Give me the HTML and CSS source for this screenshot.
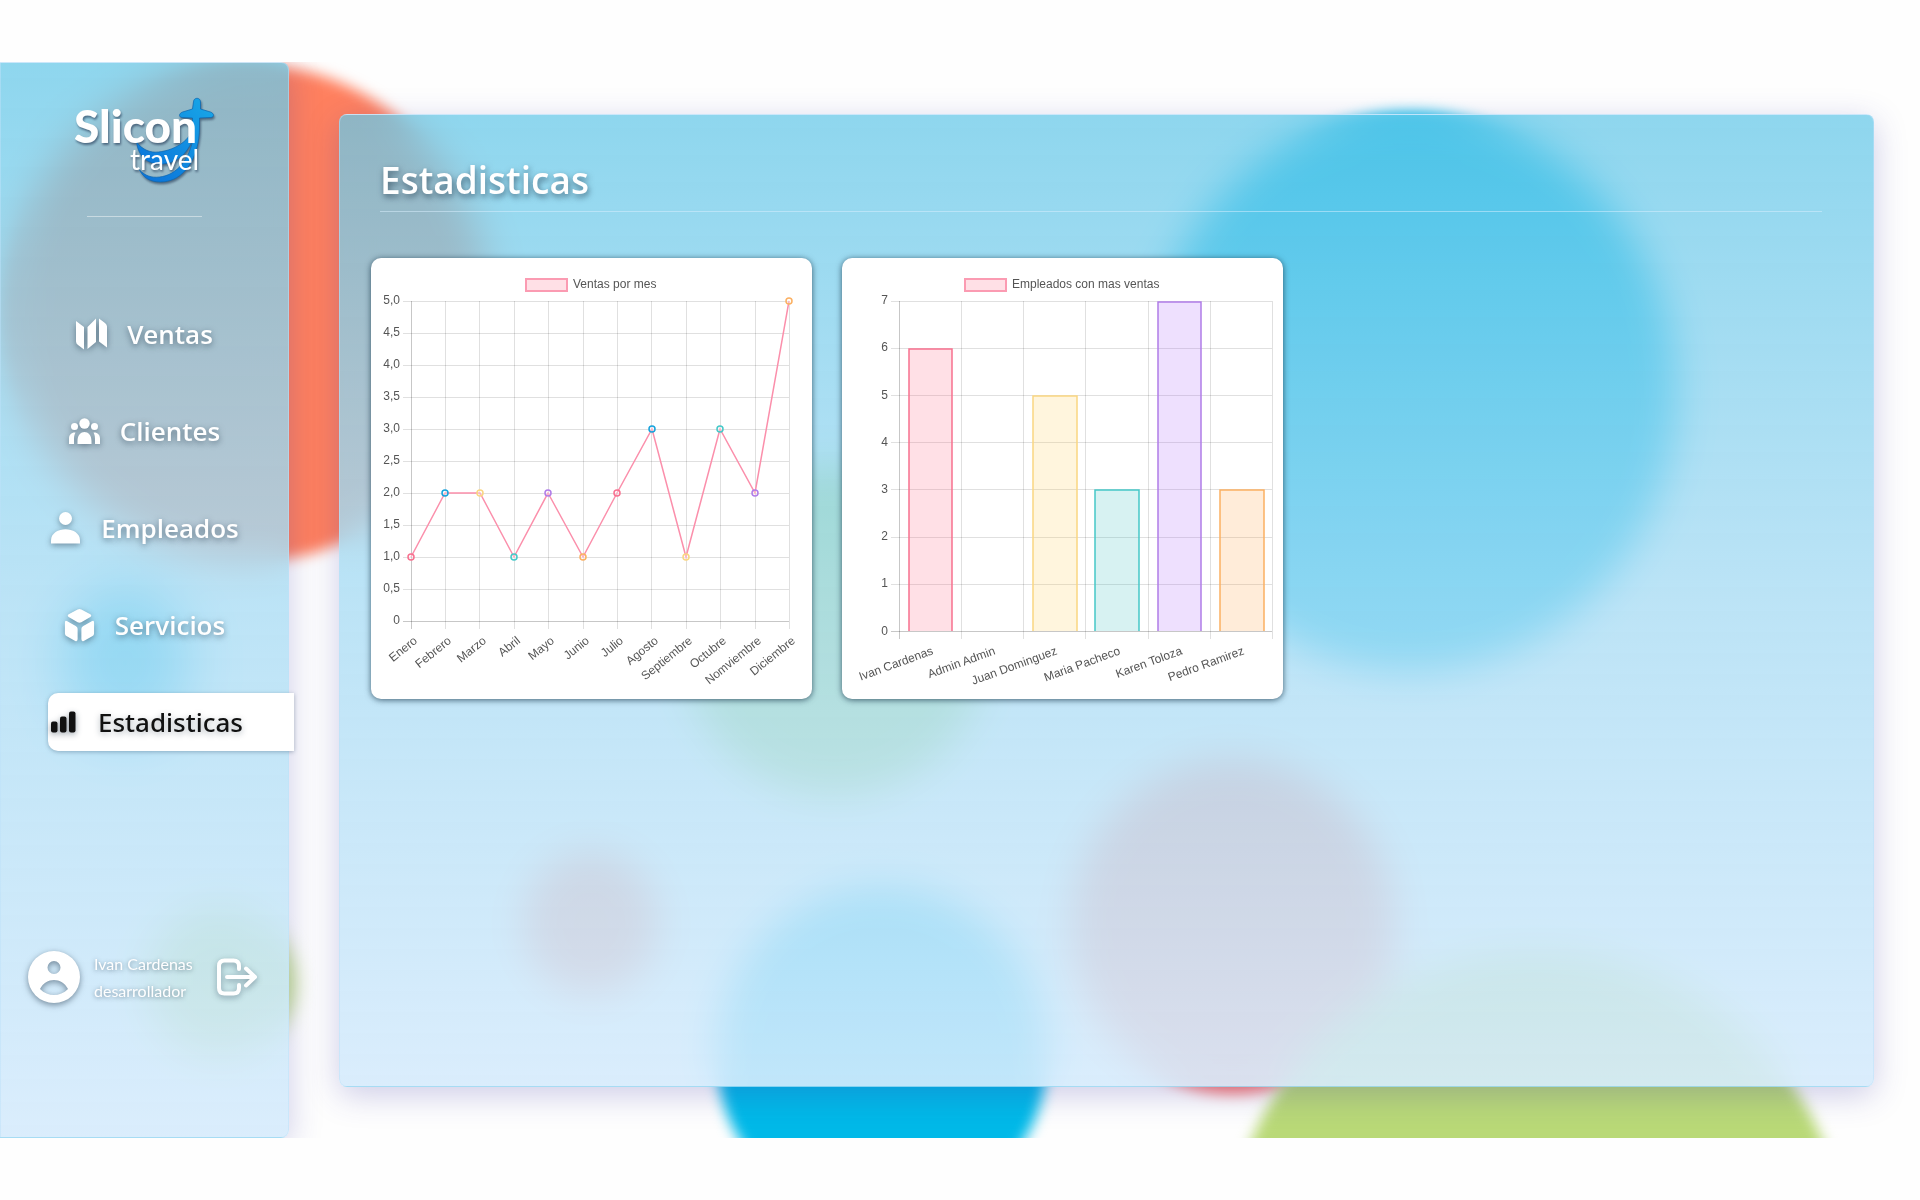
FILE: index.html
```html
<!DOCTYPE html>
<html lang="es">
<head>
<meta charset="utf-8">
<meta name="viewport" content="width=device-width, initial-scale=1">
<title>Slicon travel - Estadisticas</title>
<link rel="stylesheet" href="styles.css">
</head>
<body>
<div class="stage">
  <div class="bubbles" aria-hidden="true">
    <span class="bubble coral-large"></span>
    <span class="bubble blue-large"></span>
    <span class="bubble green-mid"></span>
    <span class="bubble red-small"></span>
    <span class="bubble red-mid"></span>
    <span class="bubble blue-bottom"></span>
    <span class="bubble green-bottom"></span>
    <span class="bubble blue-side"></span>
    <span class="bubble green-side"></span>
  </div>

  <aside class="sidebar glass">
    <svg class="logo" viewBox="0 0 146 88" role="img" aria-label="Slicon travel">
      <defs>
        <linearGradient id="swoosh" x1="0" y1="1" x2="1" y2="0">
          <stop offset="0" stop-color="#0a6fd8"/>
          <stop offset="1" stop-color="#18a8e8"/>
        </linearGradient>
      </defs>
      <g fill="url(#swoosh)" stroke="#0b66b0" stroke-width="0.7">
        <path d="M121.500 6c0-5 7-5 7 0v7l10 3c4 1.500 4 5.500 0 5.500l-11 .500v9c0 30-15 55-39 55-10 0-17-4-21-12 6 6 12 8 20 7 18-2 30-18 34-40-6 18-18 27-33 27-13 0-22-7-24-22 6 8 14 11 22 10 18-2 33-13 34-25v-9l-10-.500c-4 0-4-4 0-5.500l10-3z"/>
      </g>
      <text class="logo-name" x="2" y="47">Slicon</text>
      <text class="logo-sub" x="58" y="74">travel</text>
    </svg>
    <hr class="divider">
    <nav class="menu">
      <a class="item" href="#ventas">
        <svg class="icon" viewBox="0 0 31 31"><path d="M0 2.500l8 6V31L2 26.500Q0 25 0 23zM20 0v23.500l-8.500 7V8.500zM23 0l6 4.500q2 1.500 2 3.500v21l-8-6z"/></svg>
        Ventas</a>
      <a class="item" href="#clientes">
        <svg class="icon" viewBox="0 0 31 31"><circle cx="15.500" cy="8" r="5.200"/><circle cx="5.500" cy="11" r="3.500"/><circle cx="25.500" cy="11" r="3.500"/><path d="M8.500 28.500v-3c0-12 14-12 14 0v3zM0 28.500V23c0-4 3-6.500 6.500-6-1.500 2.500-1.500 5-1.500 8v3.500zM31 28.500V23c0-4-3-6.500-6.500-6 1.500 2.500 1.500 5 1.500 8v3.500z"/></svg>
        Clientes</a>
      <a class="item" href="#empleados">
        <svg class="icon" viewBox="0 0 31 31"><circle cx="15.500" cy="6" r="6.500"/><path d="M1 31v-3C1 13 30 13 30 28v3z"/></svg>
        Empleados</a>
      <a class="item" href="#servicios">
        <svg class="icon" viewBox="0 0 31 34"><path d="M13.500.500q2-1 4 0L27 5.500q2 1.500 0 3L17.500 14q-2 1-4 0L4 8.500q-2-1.500 0-3zM0 14.500q0-3 2.500-1.500l9 5q2 1 2 3V32q0 3-2.500 2l-9-5Q0 28 0 26zM31 14.500q0-3-2.500-1.500l-9 5q-2 1-2 3V32q0 3 2.500 2l9-5q2-1 2-3z"/></svg>
        Servicios</a>
      <a class="item active" href="#estadisticas" aria-current="page">
        <svg class="icon" viewBox="0 0 31 31"><rect x="0" y="15" width="6.500" height="11" rx="2"/><rect x="9" y="10" width="6.500" height="16" rx="2"/><rect x="18" y="5" width="6.500" height="21" rx="2"/></svg>
        Estadisticas</a>
    </nav>
    <div class="account">
      <svg class="avatar" viewBox="0 0 52 52" aria-hidden="true"><path fill-rule="evenodd" d="M26 0a26 26 0 1 1 0 52 26 26 0 0 1 0-52zM26 10a6.500 6.500 0 1 0 0 13 6.500 6.500 0 0 0 0-13zM12 38c8 8 20 8 28 0-6-12-22-12-28 0z"/></svg>
      <p class="who">Ivan Cardenas<br>desarrollador</p>
      <button class="logout" type="button" aria-label="Cerrar sesion">
        <svg viewBox="0 0 40 36" aria-hidden="true"><path d="M22 10V7q0-5.500-5.500-5.500h-9Q2 1.500 2 7v22q0 5.500 5.500 5.500h9Q22 34.500 22 29v-3M10 18h28M29 9.500l9 8.500-9 8.500"/></svg>
      </button>
    </div>
  </aside>

  <main class="panel glass">
    <h1>Estadisticas</h1>
    <div class="cards">
      <figure class="card">
        <svg class="chart" viewBox="1 0 441 441" role="img" aria-label="Ventas por mes">
          <rect class="key" x="156" y="21" width="41" height="12"/>
          <text x="203" y="30">Ventas por mes</text>
          <path class="grid" d="M33 43.500H419M33 75.500H419M33 107.500H419M33 139.500H419M33 171.500H419M33 203.500H419M33 235.500H419M33 267.500H419M33 299.500H419M33 331.500H419M75.500 43V371M109.500 43V371M144.500 43V371M178.500 43V371M213.500 43V371M247.500 43V371M281.500 43V371M316.500 43V371M350.500 43V371M385.500 43V371M419.500 43V371"/>
          <path class="grid axis" d="M33 363.500H419M41.500 43V371"/>
          <g class="ylabels">
            <text x="30" y="46">5,0</text><text x="30" y="78">4,5</text><text x="30" y="110">4,0</text><text x="30" y="142">3,5</text><text x="30" y="174">3,0</text><text x="30" y="206">2,5</text><text x="30" y="238">2,0</text><text x="30" y="270">1,5</text><text x="30" y="302">1,0</text><text x="30" y="334">0,5</text><text x="30" y="366">0</text>
          </g>
          <polyline class="line" points="41,299 75,235 110,235 144,299 178,235 213,299 247,235 282,171 316,299 350,171 385,235 419,43"/>
          <g class="points">
            <circle class="c-red" cx="41" cy="299" r="3"/><circle class="c-blue" cx="75" cy="235" r="3"/><circle class="c-yellow" cx="110" cy="235" r="3"/><circle class="c-teal" cx="144" cy="299" r="3"/><circle class="c-purple" cx="178" cy="235" r="3"/><circle class="c-orange" cx="213" cy="299" r="3"/><circle class="c-red" cx="247" cy="235" r="3"/><circle class="c-blue" cx="282" cy="171" r="3"/><circle class="c-yellow" cx="316" cy="299" r="3"/><circle class="c-teal" cx="350" cy="171" r="3"/><circle class="c-purple" cx="385" cy="235" r="3"/><circle class="c-orange" cx="419" cy="43" r="3"/>
          </g>
          <g class="xlabels">
            <text transform="translate(48 384) rotate(-39)">Enero</text><text transform="translate(82 384) rotate(-39)">Febrero</text><text transform="translate(117 384) rotate(-39)">Marzo</text><text transform="translate(151 384) rotate(-39)">Abril</text><text transform="translate(185 384) rotate(-39)">Mayo</text><text transform="translate(220 384) rotate(-39)">Junio</text><text transform="translate(254 384) rotate(-39)">Julio</text><text transform="translate(289 384) rotate(-39)">Agosto</text><text transform="translate(323 384) rotate(-39)">Septiembre</text><text transform="translate(357 384) rotate(-39)">Octubre</text><text transform="translate(392 384) rotate(-39)">Nomviembre</text><text transform="translate(426 384) rotate(-39)">Diciembre</text>
          </g>
        </svg>
      </figure>
      <figure class="card">
        <svg class="chart" viewBox="1 0 441 441" role="img" aria-label="Empleados con mas ventas">
          <rect class="key" x="124" y="21" width="41" height="12"/>
          <text x="171" y="30">Empleados con mas ventas</text>
          <path class="grid" d="M50 43.500H431M50 90.500H431M50 137.500H431M50 184.500H431M50 231.500H431M50 279.500H431M50 326.500H431M120.500 43V381M182.500 43V381M244.500 43V381M307.500 43V381M369.500 43V381M431.500 43V381"/>
          <path class="grid axis" d="M50 373.500H431M58.500 43V381"/>
          <g class="ylabels">
            <text x="47" y="46">7</text><text x="47" y="93">6</text><text x="47" y="141">5</text><text x="47" y="188">4</text><text x="47" y="235">3</text><text x="47" y="282">2</text><text x="47" y="329">1</text><text x="47" y="377">0</text>
          </g>
          <g class="bars">
            <path class="c-red" d="M68 373V91H111V373"/><path class="c-yellow" d="M192 373V138H236V373"/><path class="c-teal" d="M254 373V232H298V373"/><path class="c-purple" d="M317 373V44H360V373"/><path class="c-orange" d="M379 373V232H423V373"/>
          </g>
          <g class="xlabels">
            <text transform="translate(93 396) rotate(-20)">Ivan Cardenas</text><text transform="translate(155 396) rotate(-20)">Admin Admin</text><text transform="translate(217 396) rotate(-20)">Juan Dominguez</text><text transform="translate(280 396) rotate(-20)">Maria Pacheco</text><text transform="translate(342 396) rotate(-20)">Karen Toloza</text><text transform="translate(404 396) rotate(-20)">Pedro Ramirez</text>
          </g>
        </svg>
      </figure>
    </div>
  </main>
</div>
</body>
</html>
```
FILE: styles.css
```css
* { box-sizing: border-box; }

body {
  margin: 0;
  padding: 62px 0;
  background: #fefefe;
  font-family: "Open Sans", "Noto Sans", sans-serif;
}

.stage {
  position: relative;
  display: flex;
  min-height: calc(100vh - 124px);
  overflow: hidden;
}

/* Coloured circles behind the glass surfaces */
.bubbles { position: absolute; inset: 0; }
.bubble { position: absolute; border-radius: 50%; filter: blur(7px); }
.coral-large { left: 5px; top: 2px; width: 486px; height: 498px; background: #ff805f; }
.blue-large { left: 1146px; top: 50px; width: 530px; height: 560px; background: #00b9e8; }
.green-mid { left: 680px; top: 405px; width: 310px; height: 330px; background: #a9d977; }
.red-small { left: 523px; top: 790px; width: 136px; height: 144px; background: #ff8070; }
.red-mid { left: 1071px; top: 698px; width: 324px; height: 334px; background: #ff7a70; }
.blue-bottom { left: 716px; top: 825px; width: 332px; height: 334px; background: #00b9e8; }
.green-bottom { left: 1228px; top: 890px; width: 618px; height: 610px; background: #b9d977; }
.blue-side { left: 60px; top: 526px; width: 130px; height: 150px; background: #20bce8; filter: blur(20px); }
.green-side { left: 146px; top: 846px; width: 148px; height: 150px; background: #b9d977; filter: blur(10px); }

.glass {
  position: relative;
  border: 1px solid rgba(190, 225, 250, .5);
  background: linear-gradient(rgba(103, 200, 232, .74), rgba(172, 221, 244, .81) 50%, rgba(214, 235, 252, .9));
  box-shadow: 0 8px 32px rgba(60, 55, 165, .25);
  backdrop-filter: blur(19px);
}

.sidebar {
  z-index: 1;
  display: flex;
  flex: none;
  flex-direction: column;
  align-items: center;
  width: 289px;
  padding: 33px 0 133px;
  border-radius: 0 8px 8px 0;
}

.logo {
  width: 146px;
  height: 88px;
  overflow: visible;
  filter: drop-shadow(1px 2px 1px rgba(30, 50, 80, .6));
}
.logo text { fill: #fff; font-family: Lato, sans-serif; }
.logo .logo-name { font-size: 46px; font-weight: 900; }
.logo .logo-sub { font-size: 28px; }

.divider {
  width: 115px;
  margin: 32px 0 88px;
  border: 0;
  border-top: 1px solid rgba(255, 255, 255, .45);
}

.menu {
  display: flex;
  flex-direction: column;
  gap: 39px;
  width: 100%;
  margin-bottom: 40px;
}
.item {
  display: flex;
  align-items: center;
  justify-content: center;
  gap: 20px;
  height: 58px;
  color: #fff;
  font-size: 26px;
  font-weight: 600;
  text-decoration: none;
  text-shadow: 0 2px 6px rgba(20, 40, 60, .55);
}
.icon {
  width: 31px;
  height: 32px;
  overflow: visible;
  fill: currentColor;
  filter: drop-shadow(0 2px 3px rgba(20, 40, 60, .45));
}
.active {
  justify-content: flex-start;
  gap: 16px;
  margin: 0 -6px 0 47px;
  padding-left: 3px;
  border-radius: 10px 0 0 10px;
  background: #fff;
  box-shadow: 0 1px 4px rgba(30, 60, 90, .35);
  color: #111;
  font-family: "Noto Sans", "Open Sans", sans-serif;
  font-weight: 500;
  text-shadow: 0 2px 6px rgba(20, 40, 60, .35);
}

.account {
  display: flex;
  align-items: center;
  gap: 14px;
  width: 100%;
  margin-top: auto;
  padding: 0 31px 0 27px;
}
.avatar { width: 52px; height: 52px; overflow: visible; fill: #fff; filter: drop-shadow(0 2px 3px rgba(20, 40, 60, .5)); }
.who {
  margin: 0;
  color: #fff;
  font: 16px/27px Lato, sans-serif;
  text-shadow: 0 1px 4px rgba(20, 40, 60, .5);
}
.logout { margin-left: auto; padding: 0; border: 0; background: none; cursor: pointer; }
.logout svg {
  display: block;
  width: 40px;
  height: 36px;
  overflow: visible;
  fill: none;
  stroke: #fff;
  stroke-width: 4;
  stroke-linecap: round;
  stroke-linejoin: round;
  filter: drop-shadow(0 2px 3px rgba(20, 40, 60, .4));
}

.panel {
  flex: 1;
  margin: 52px 46px 51px 50px;
  padding: 39px 31px;
  border-radius: 8px;
}
h1 {
  margin: 0 20px 46px 9px;
  padding-bottom: 5px;
  border-bottom: 1px solid rgba(220, 240, 255, .5);
  color: #fff;
  font-size: 37px;
  font-weight: 600;
  line-height: 52px;
  text-shadow: 1px 3px 6px rgba(20, 40, 60, .6);
}
.cards { display: flex; flex-wrap: wrap; gap: 30px; }
.card {
  width: 441px;
  margin: 0;
  border-radius: 10px;
  background: #fff;
  box-shadow: 0 1px 6px rgba(20, 50, 70, .75);
}

.chart { display: block; width: 100%; }
.chart text { fill: #555; font: 12px "Liberation Sans", Arial, sans-serif; }
.ylabels, .xlabels { text-anchor: end; }
.grid { fill: none; stroke: rgba(0, 0, 0, .12); }
.axis { stroke: rgba(0, 0, 0, .22); }
.key { fill: #ffe0e6; stroke: #fb9bb2; stroke-width: 2; }
.line { fill: none; stroke: #fb8fab; stroke-width: 1.5; }
.points circle { fill: rgba(255, 255, 255, .3); stroke-width: 1.5; }
.bars path { stroke-width: 1.5; fill-opacity: .2; }
.c-red { fill: #ff6384; stroke: #f8708f; }
.c-blue { fill: #36a2eb; stroke: #16a2dc; }
.c-yellow { fill: #ffce56; stroke: #fad681; }
.c-teal { fill: #36bfbf; stroke: #45c8c8; }
.c-purple { fill: #a866f8; stroke: #b07ce8; }
.c-orange { fill: #ff9f40; stroke: #fbb062; }
```
